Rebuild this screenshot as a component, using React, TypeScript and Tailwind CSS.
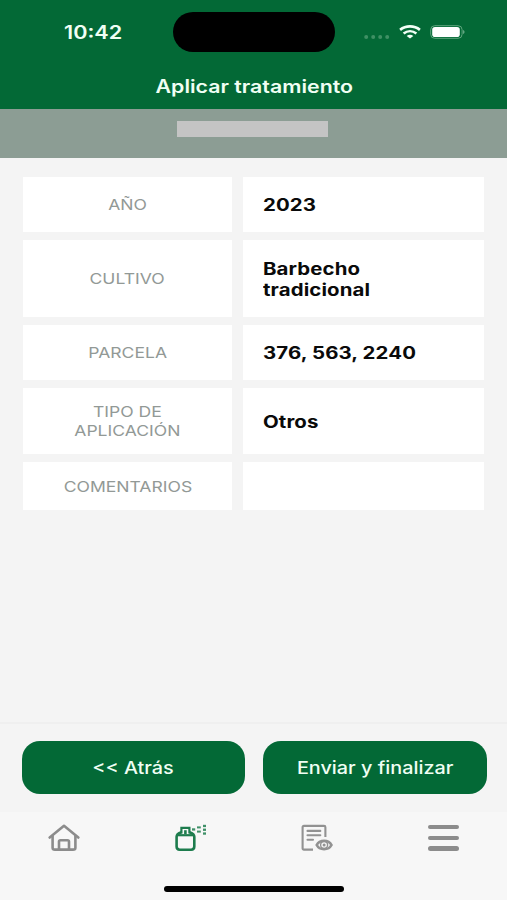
import { ReactNode } from 'react';

interface Row {
  label: string[];
  value: string[];
  height: string;
}

const rows: Row[] = [
  { label: ['AÑO'], value: ['2023'], height: 'h-[55px]' },
  { label: ['CULTIVO'], value: ['Barbecho', 'tradicional'], height: 'h-[77px]' },
  { label: ['PARCELA'], value: ['376, 563, 2240'], height: 'h-[55px]' },
  { label: ['TIPO DE', 'APLICACIÓN'], value: ['Otros'], height: 'h-[66px]' },
  { label: ['COMENTARIOS'], value: [], height: 'h-[48px]' },
];

function StatusBar() {
  return (
    <div className="h-[63px] flex items-start pt-3 text-[#f0fff4]">
      <div className="w-[173px] h-10 flex items-center pl-[64px]">
        <span className="inline-block origin-left scale-x-[1.2] text-[18px] font-semibold">10:42</span>
      </div>
      <div className="w-[162px] h-10 rounded-full bg-black" />
      <div className="flex-1 h-10 flex items-center">
        <svg width="27" height="6" viewBox="0 0 27 6" className="ml-[29px] mt-[9px]" fill="#3f9064">
          <circle cx="2.2" cy="3" r="2" />
          <circle cx="9.2" cy="3" r="2" />
          <circle cx="16.2" cy="3" r="2" />
          <circle cx="23.2" cy="3" r="2" />
        </svg>
        <svg width="22" height="14" viewBox="0 0 22 14" className="ml-[7.5px] shrink-0" fill="none" stroke="#f2fff6">
          <path d="M1.1 4.9C6.8.3 15.2.3 20.9 4.9" strokeWidth="2.7" />
          <path d="M4.6 8.5C8.4 5.5 13.6 5.5 17.4 8.5" strokeWidth="2.6" />
          <path d="M11 13.6L7.7 11C9.6 9.4 12.4 9.4 14.3 11Z" fill="#f2fff6" stroke="none" />
        </svg>
        <svg width="36" height="14" viewBox="0 0 36 14" className="ml-[9px] shrink-0">
          <rect x="0.7" y="0.7" width="31.4" height="12.6" rx="4" fill="none" stroke="#5fa67e" strokeWidth="1" />
          <rect x="2.2" y="1.9" width="27.6" height="10.2" rx="2.8" fill="#fff" />
          <path d="M33.3 5v4c1.5-.5 1.5-3.5 0-4z" fill="#8fc3a5" />
        </svg>
      </div>
    </div>
  );
}

function Button({ children }: { children: ReactNode }) {
  return (
    <button
      type="button"
      className="flex-1 h-[53px] pt-[2px] rounded-[18px] bg-[#036936] text-[#f0fff4] text-[17px] font-medium"
    >
      <span className="inline-block whitespace-nowrap scale-x-[1.165]">{children}</span>
    </button>
  );
}

function HomeIcon() {
  return (
    <svg width="32" height="28" viewBox="0 0 32 28" fill="none" stroke="#8c8c8c" strokeWidth="2.6" strokeLinecap="round" strokeLinejoin="round">
      <path d="M1.7 13.5L16 1.8L30.3 13.5" />
      <path d="M4.6 12V23.7Q4.6 25.6 7 25.6H25Q27.4 25.6 27.4 23.7V12" />
      <path d="M11 25.3V17.6Q11 16.2 12.5 16.2H19.5Q21 16.2 21 17.6V25.3" />
    </svg>
  );
}

function SprayIcon() {
  return (
    <svg width="34" height="28" viewBox="0 0 34 28" fill="none" stroke="#1d7c4d">
      <path d="M7.4 8.3Q2.6 9.8 2.6 12.8V22.6Q2.6 25.7 5.700 25.700H17.200Q20.300 25.700 20.300 22.600V12.800Q20.300 9.800 15.500 8.300" strokeWidth="2.6" />
      <path d="M4 11.200H19" strokeWidth="2.2" />
      <path d="M7.4 9.400V3.900H15.400V9.400" strokeWidth="2.2" />
      <path d="M11.4 6.200V10" strokeWidth="2.600" />
      <g fill="#3f9068" stroke="none">
        <rect x="18" y="4.3" width="3.2" height="2.3" />
        <rect x="23" y="2.4" width="3.8" height="2" />
        <rect x="23" y="6.6" width="3.8" height="2" />
        <rect x="29" y="0.8" width="3" height="2.3" />
        <rect x="29" y="4.6" width="3" height="2.3" />
        <rect x="29" y="8.4" width="3" height="2.3" />
      </g>
    </svg>
  );
}

function ReportIcon() {
  return (
    <svg width="32" height="28" viewBox="0 0 32 28" fill="none" stroke="#929292">
      <path d="M12 25.6H3Q1.6 25.6 1.6 24.2V3.3Q1.6 1.9 3 1.9H23Q24.4 1.9 24.4 3.3V13" strokeWidth="2.1" />
      <path d="M6.5 6.9H19.3M6.5 11.2H19.3M6.5 15.7H12" strokeWidth="2.1" strokeLinecap="round" />
      <path d="M15.7 21C18.6 15.4 27.6 15.4 30.5 21C27.6 26.6 18.6 26.6 15.7 21Z" strokeWidth="2.6" />
      <circle cx="23.1" cy="21" r="3.5" strokeWidth="1.4" />
      <circle cx="23.1" cy="21" r="1.5" fill="#929292" stroke="none" />
    </svg>
  );
}

function MenuIcon() {
  return (
    <div className="w-[31px] flex flex-col gap-[6.2px]">
      <div className="h-[4.4px] rounded-full bg-[#8c8c8c]" />
      <div className="h-[4.4px] rounded-full bg-[#8c8c8c]" />
      <div className="h-[4.4px] rounded-full bg-[#8c8c8c]" />
    </div>
  );
}

export default function App() {
  return (
    <div className="w-[507px] h-[900px] flex flex-col overflow-hidden bg-[#f4f4f4] font-['Inter','Liberation_Sans',sans-serif]">
      <header className="h-[109px] bg-[#036936]">
        <StatusBar />
        <h1 className="h-[46px] pt-px pl-[2px] flex items-center justify-center text-[18px] font-semibold text-[#f0fff4]">
          <span className="inline-block whitespace-nowrap scale-x-[1.185]">Aplicar tratamiento</span>
        </h1>
      </header>

      <div className="h-[49px] shrink-0 bg-[#8c9d94] pt-3 pl-[177px]">
        <div className="w-[151px] h-4 bg-[#c4c4c4]" />
      </div>

      <main className="flex-1 pt-[19px] px-[23px] flex flex-col gap-2">
        {rows.map((row) => (
          <div key={row.label[0]} className={`flex gap-[11px] ${row.height}`}>
            <div className="w-[209px] bg-white flex flex-col items-center justify-center text-[15px] leading-[19px] text-[#929996]">
              {row.label.map((line) => (
                <span key={line} className="inline-block whitespace-nowrap scale-x-[1.17]">{line}</span>
              ))}
            </div>
            <div className="flex-1 bg-white flex flex-col items-start justify-center pl-5 pt-[2px] text-[17px] leading-[21px] font-bold tracking-[0.1px] text-[#0a0a0a]">
              {row.value.map((line) => (
                <span key={line} className="inline-block whitespace-nowrap origin-left scale-x-[1.2]">{line}</span>
              ))}
            </div>
          </div>
        ))}
      </main>

      <div className="h-[90px] shrink-0 border-t-2 border-[#efefef] pt-[17px] pl-[21.5px] pr-[20.5px] flex items-start gap-[18px]">
        <Button>&lt;&lt; Atrás</Button>
        <Button>Enviar y finalizar</Button>
      </div>

      <nav className="h-[88px] shrink-0 bg-[#f7f7f7] flex flex-col items-center">
        <div className="w-full h-[74px] pt-3 pl-px grid grid-cols-4 items-start">
          <div className="flex justify-center"><HomeIcon /></div>
          <div className="flex justify-center"><SprayIcon /></div>
          <div className="flex justify-center"><ReportIcon /></div>
          <div className="flex justify-center pt-px"><MenuIcon /></div>
        </div>
        <div className="w-[180px] h-[5.5px] rounded-full bg-black" />
      </nav>
    </div>
  );
}
